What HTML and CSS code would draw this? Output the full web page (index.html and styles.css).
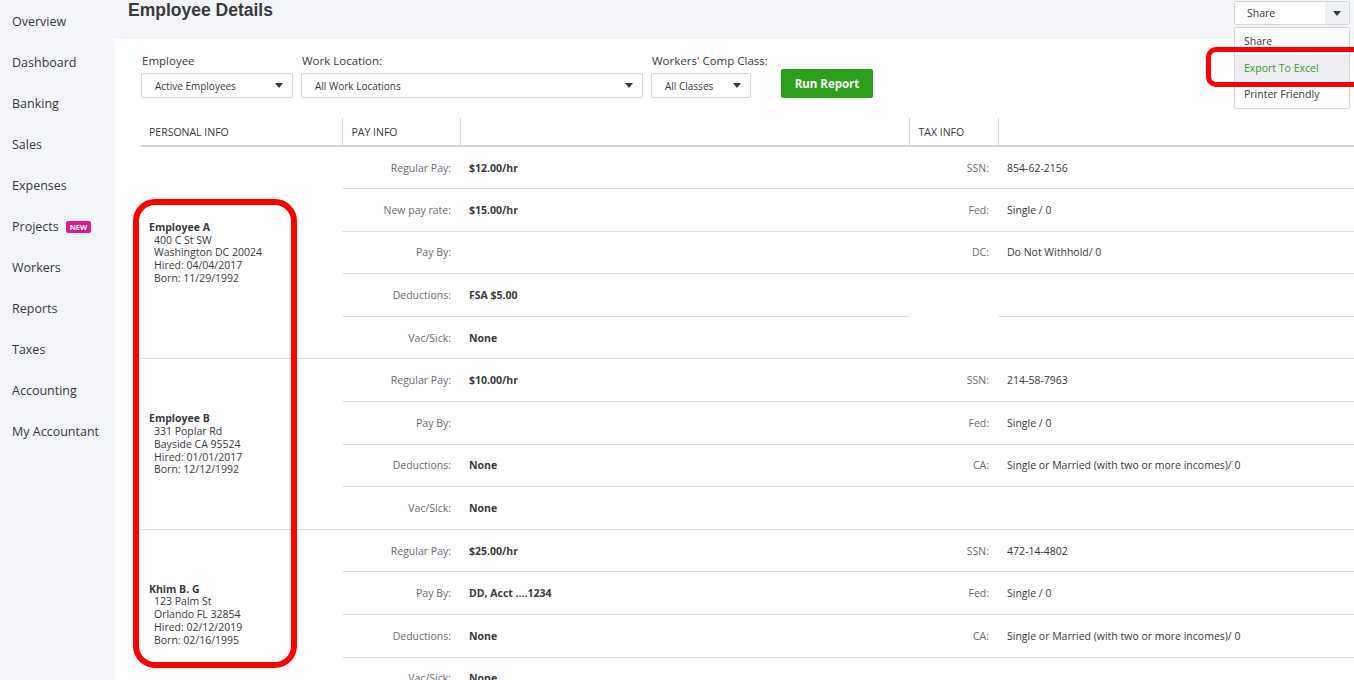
FILE: index.html
```html
<!DOCTYPE html>
<html lang="en">

<head>
    <meta charset="UTF-8">
    <meta name="viewport" content="width=device-width, initial-scale=1.0">
    <title>Employee Details</title>
    <link rel="stylesheet" href="styles.css">
</head>

<body>
    <div class="app">
        <nav class="sidebar">
            <a class="nav-item">Overview</a>
            <a class="nav-item">Dashboard</a>
            <a class="nav-item">Banking</a>
            <a class="nav-item">Sales</a>
            <a class="nav-item">Expenses</a>
            <a class="nav-item">Projects <span class="badge">NEW</span></a>
            <a class="nav-item">Workers</a>
            <a class="nav-item">Reports</a>
            <a class="nav-item">Taxes</a>
            <a class="nav-item">Accounting</a>
            <a class="nav-item">My Accountant</a>
        </nav>

        <div class="main">
            <header class="page-head">
                <h1>Employee Details</h1>
                <div class="share">
                    <div class="share-btn">
                        <span class="share-label">Share</span>
                        <span class="share-caret">
                            <svg width="8" height="5" viewBox="0 0 8 5"><path d="M0 0h8L4 5z" fill="#393a3d"/></svg>
                        </span>
                    </div>
                    <ul class="share-menu">
                        <li>Share</li>
                        <li class="active">Export To Excel</li>
                        <li>Printer Friendly</li>
                    </ul>
                </div>
            </header>

            <section class="content">
                <div class="filters">
                    <div class="field field-emp">
                        <label>Employee</label>
                        <div class="select">Active Employees
                            <svg width="8" height="5" viewBox="0 0 8 5"><path d="M0 0h8L4 5z" fill="#393a3d"/></svg>
                        </div>
                    </div>
                    <div class="field field-loc">
                        <label>Work Location:</label>
                        <div class="select">All Work Locations
                            <svg width="8" height="5" viewBox="0 0 8 5"><path d="M0 0h8L4 5z" fill="#393a3d"/></svg>
                        </div>
                    </div>
                    <div class="field field-class">
                        <label>Workers' Comp Class:</label>
                        <div class="select">All Classes
                            <svg width="8" height="5" viewBox="0 0 8 5"><path d="M0 0h8L4 5z" fill="#393a3d"/></svg>
                        </div>
                    </div>
                    <button class="run-btn">Run Report</button>
                </div>

                <table class="report">
                    <colgroup>
                        <col style="width: 201px">
                        <col style="width: 118px">
                        <col style="width: 449px">
                        <col style="width: 89px">
                        <col>
                    </colgroup>
                    <thead>
                        <tr>
                            <th class="first">Personal Info</th>
                            <th>Pay Info</th>
                            <th></th>
                            <th>Tax Info</th>
                            <th></th>
                        </tr>
                    </thead>
                    <tbody>
                        <tr>
                            <td class="person" rowspan="5">
                                <div class="name">Employee A</div>
                                <div class="addr">400 C St SW</div>
                                <div class="addr">Washington DC 20024</div>
                                <div class="addr">Hired: 04/04/2017</div>
                                <div class="addr">Born: 11/29/1992</div>
                            </td>
                            <td class="lbl">Regular Pay:</td>
                            <td class="val">$12.00/hr</td>
                            <td class="lbl">SSN:</td>
                            <td class="tax">854-62-2156</td>
                        </tr>
                        <tr>
                            <td class="lbl">New pay rate:</td>
                            <td class="val">$15.00/hr</td>
                            <td class="lbl">Fed:</td>
                            <td class="tax">Single / 0</td>
                        </tr>
                        <tr>
                            <td class="lbl">Pay By:</td>
                            <td class="val"></td>
                            <td class="lbl">DC:</td>
                            <td class="tax">Do Not Withhold/ 0</td>
                        </tr>
                        <tr>
                            <td class="lbl">Deductions:</td>
                            <td class="val">FSA $5.00</td>
                            <td class="lbl blank"></td>
                            <td class="tax"></td>
                        </tr>
                        <tr>
                            <td class="lbl">Vac/Sick:</td>
                            <td class="val">None</td>
                            <td class="lbl"></td>
                            <td class="tax"></td>
                        </tr>
                    </tbody>
                    <tbody>
                        <tr>
                            <td class="person" rowspan="4">
                                <div class="name">Employee B</div>
                                <div class="addr">331 Poplar Rd</div>
                                <div class="addr">Bayside CA 95524</div>
                                <div class="addr">Hired: 01/01/2017</div>
                                <div class="addr">Born: 12/12/1992</div>
                            </td>
                            <td class="lbl">Regular Pay:</td>
                            <td class="val">$10.00/hr</td>
                            <td class="lbl">SSN:</td>
                            <td class="tax">214-58-7963</td>
                        </tr>
                        <tr>
                            <td class="lbl">Pay By:</td>
                            <td class="val"></td>
                            <td class="lbl">Fed:</td>
                            <td class="tax">Single / 0</td>
                        </tr>
                        <tr>
                            <td class="lbl">Deductions:</td>
                            <td class="val">None</td>
                            <td class="lbl">CA:</td>
                            <td class="tax">Single or Married (with two or more incomes)/ 0</td>
                        </tr>
                        <tr>
                            <td class="lbl">Vac/Sick:</td>
                            <td class="val">None</td>
                            <td class="lbl"></td>
                            <td class="tax"></td>
                        </tr>
                    </tbody>
                    <tbody>
                        <tr>
                            <td class="person" rowspan="4">
                                <div class="name">Khim B. G</div>
                                <div class="addr">123 Palm St</div>
                                <div class="addr">Orlando FL 32854</div>
                                <div class="addr">Hired: 02/12/2019</div>
                                <div class="addr">Born: 02/16/1995</div>
                            </td>
                            <td class="lbl">Regular Pay:</td>
                            <td class="val">$25.00/hr</td>
                            <td class="lbl">SSN:</td>
                            <td class="tax">472-14-4802</td>
                        </tr>
                        <tr>
                            <td class="lbl">Pay By:</td>
                            <td class="val">DD, Acct ....1234</td>
                            <td class="lbl">Fed:</td>
                            <td class="tax">Single / 0</td>
                        </tr>
                        <tr>
                            <td class="lbl">Deductions:</td>
                            <td class="val">None</td>
                            <td class="lbl">CA:</td>
                            <td class="tax">Single or Married (with two or more incomes)/ 0</td>
                        </tr>
                        <tr>
                            <td class="lbl">Vac/Sick:</td>
                            <td class="val">None</td>
                            <td class="lbl blank"></td>
                            <td class="tax"></td>
                        </tr>
                    </tbody>
                </table>
            </section>
        </div>

        <div class="mark mark-person"></div>
        <div class="mark mark-export"></div>
    </div>
</body>

</html>
```

FILE: styles.css
```css
* {
    margin: 0;
    padding: 0;
    box-sizing: border-box;
}

:root {
    --text: #393a3d;
    --muted: #6b6c72;
    --line: #dcdee2;
    --green: #2ca01c;
    --bg: #f4f5f8;
}

body {
    font-family: 'Open Sans', 'Liberation Sans', sans-serif;
    color: var(--text);
    background-color: var(--bg);
}

.app {
    display: flex;
    width: 1354px;
    height: 680px;
    overflow: hidden;
    position: relative;
}

/* left nav */
.sidebar {
    width: 115px;
    flex-shrink: 0;
    padding-top: 1px;
    background-color: var(--bg);
}

.nav-item {
    display: flex;
    align-items: center;
    height: 41px;
    padding-left: 12px;
    font-size: 12.5px;
    color: var(--text);
}

.badge {
    margin-left: 7px;
    background-color: #e0198f;
    color: white;
    font-size: 7.5px;
    font-weight: 700;
    line-height: 12px;
    padding: 0 4px;
    border-radius: 2px;
}

.main {
    flex: 1;
    display: flex;
    flex-direction: column;
    min-height: 0;
}

/* header */
.page-head {
    height: 39px;
    flex-shrink: 0;
    display: flex;
    justify-content: space-between;
    align-items: flex-start;
    padding: 0 4px 0 13px;
}

.page-head h1 {
    font-family: 'Liberation Sans', Arial, sans-serif;
    font-size: 17.5px;
    line-height: 21px;
    font-weight: 700;
    color: #393a3d;
}

.share {
    position: relative;
    width: 116px;
    margin-top: 1px;
    font-size: 10.5px;
}

.share-btn {
    display: flex;
    height: 24px;
    background-color: white;
    border: 1px solid #d4d7dc;
    border-radius: 2px;
}

.share-label {
    flex: 1;
    padding-left: 12px;
    line-height: 22px;
}

.share-caret {
    width: 24px;
    background-color: #eef0f3;
    display: flex;
    justify-content: center;
    align-items: center;
}

.share-menu {
    position: absolute;
    top: 26px;
    left: 0;
    width: 116px;
    list-style: none;
    background-color: white;
    border: 1px solid #d4d7dc;
    border-radius: 2px;
    z-index: 2;
}

.share-menu li {
    height: 26.6px;
    line-height: 26.6px;
    padding-left: 9px;
}

.share-menu li.active {
    background-color: #eceef1;
    color: #3b9b33;
}

/* white card */
.content {
    flex: 1;
    min-height: 0;
    background-color: white;
    padding: 14px 0 0 26px;
}

.filters {
    display: flex;
    align-items: flex-end;
    gap: 8px;
}

.field label {
    display: block;
    font-size: 11.5px;
    line-height: 16px;
    margin-bottom: 4px;
    padding-left: 1px;
    white-space: nowrap;
}

.select {
    height: 25px;
    display: flex;
    justify-content: space-between;
    align-items: center;
    padding: 0 9px 0 13px;
    border: 1px solid #d4d7dc;
    border-radius: 2px;
    font-size: 10px;
}

.field-emp { width: 152px; }
.field-loc { width: 342px; }
.field-class { width: 100px; }

.run-btn {
    margin-left: 22px;
    width: 92px;
    height: 29px;
    background-color: var(--green);
    color: white;
    border: none;
    border-radius: 2px;
    font-family: 'Open Sans', sans-serif;
    font-size: 11.5px;
    font-weight: 700;
}

/* report table */
.report {
    margin-top: 20px;
    width: 1213px;
    border-collapse: collapse;
    table-layout: fixed;
    font-size: 10.5px;
}

.report th {
    height: 28px;
    text-align: left;
    font-weight: 400;
    text-transform: uppercase;
    padding-left: 9px;
    border-bottom: 2px solid #d4d7dc;
    border-left: 1px solid #d4d7dc;
}

.report th.first {
    border-left: none;
    padding-left: 8px;
}

.report td {
    height: 42.6px;
    padding: 0;
    border-bottom: 1px solid var(--line);
    vertical-align: middle;
    white-space: nowrap;
}

.report td.blank {
    border-bottom: none;
}

.lbl {
    text-align: right;
    padding-right: 9px !important;
    color: var(--muted);
}

.val {
    padding-left: 9px !important;
    font-weight: 700;
}

.tax {
    padding-left: 9px !important;
}

.person {
    padding-left: 8px !important;
    font-size: 10.5px;
    line-height: 12.8px;
}

.name {
    font-weight: 700;
}

.addr {
    padding-left: 5px;
}

/* red annotation boxes */
.mark {
    position: absolute;
    border: 6px solid #ff0000;
    border-radius: 22px;
    z-index: 3;
}

.mark-person {
    left: 133px;
    top: 199px;
    width: 164px;
    height: 469px;
}

.mark-export {
    left: 1206px;
    top: 47px;
    width: 160px;
    height: 40px;
    border-width: 5px;
    border-radius: 10px;
}
```
